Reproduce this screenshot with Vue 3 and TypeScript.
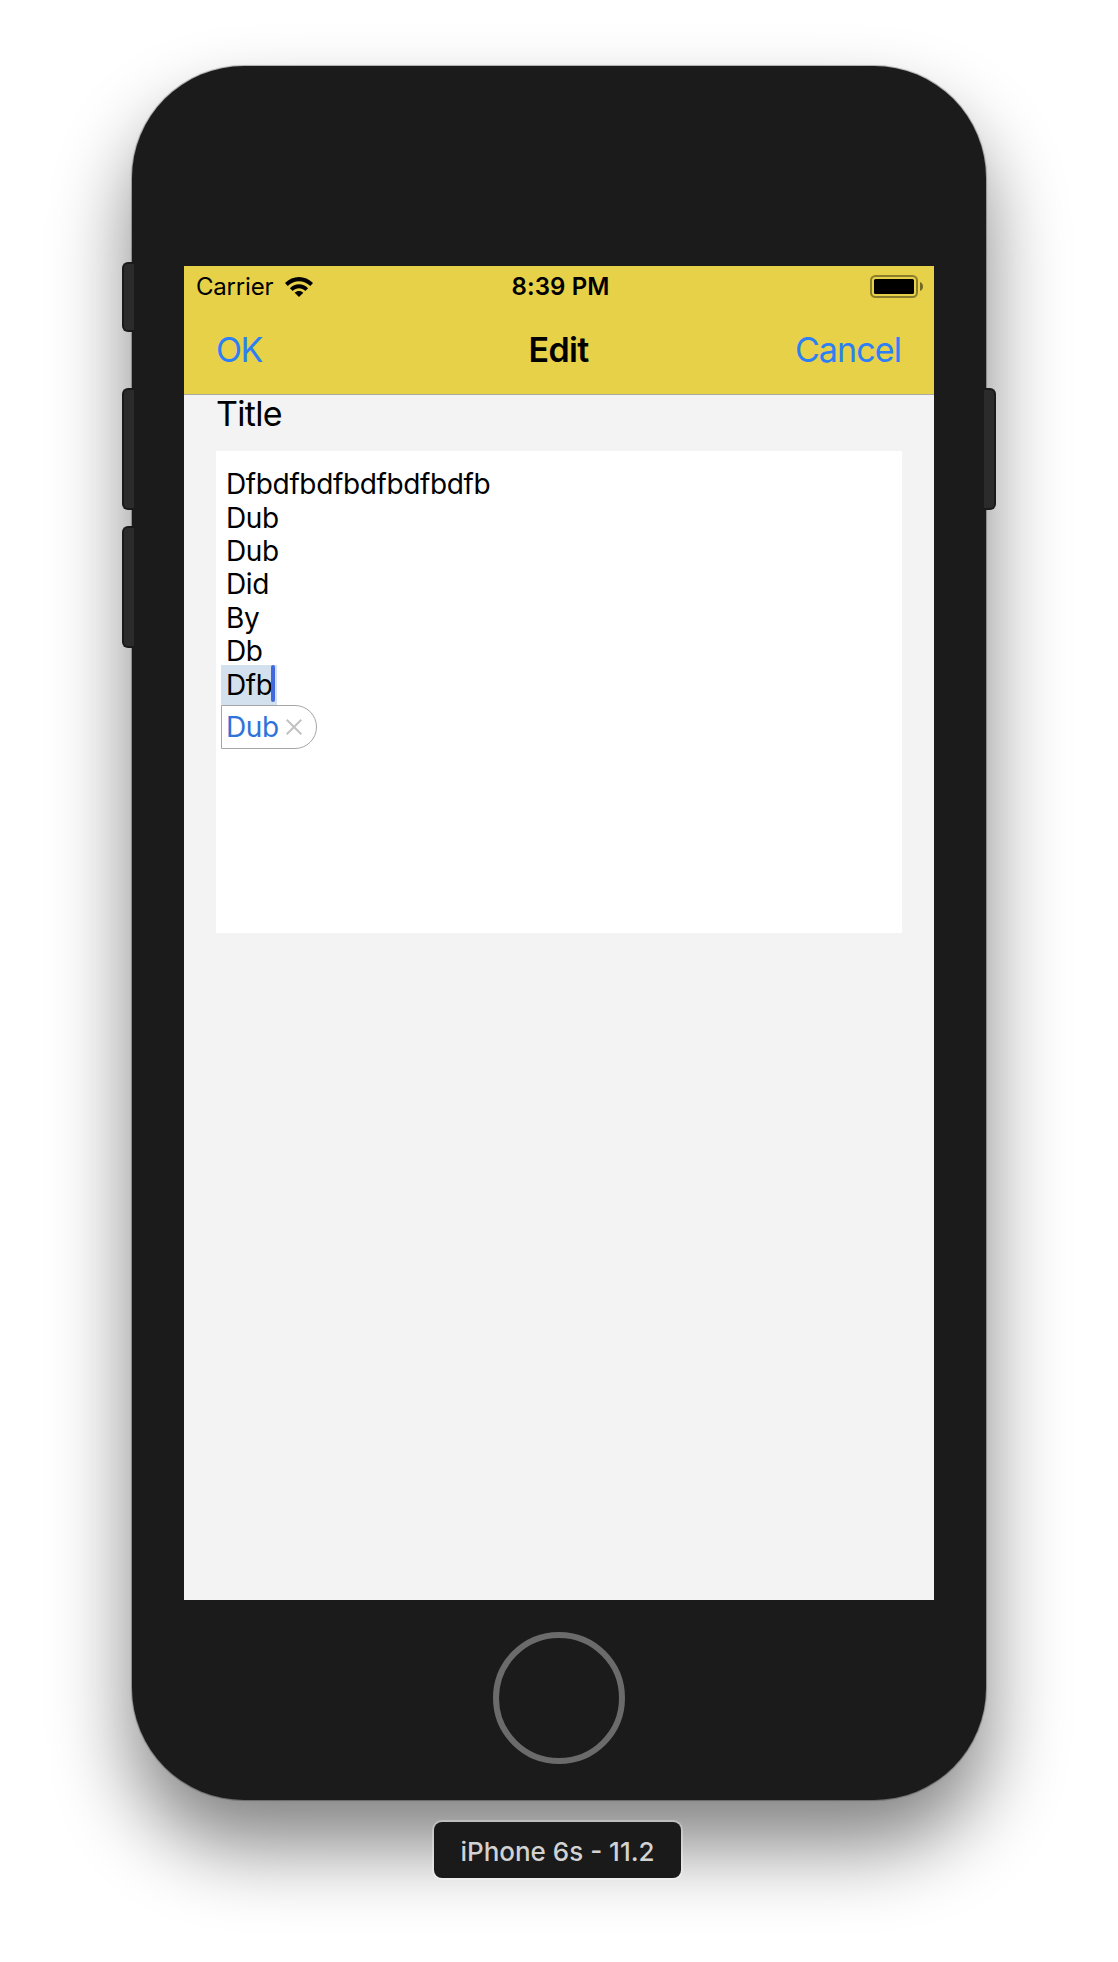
<script setup lang="ts">
interface SideButton {
  side: 'left' | 'right'
  top: number
  height: number
}

const sideButtons: SideButton[] = [
  { side: 'left', top: 196, height: 70 },
  { side: 'left', top: 322, height: 122 },
  { side: 'left', top: 460, height: 122 },
  { side: 'right', top: 322, height: 122 },
]

const lines: string[] = ['Dfbdfbdfbdfbdfbdfb', 'Dub', 'Dub', 'Did', 'By', 'Db']
</script>

<template>
  <main class="stage">
    <div class="device">
      <span
        v-for="(b, i) in sideButtons"
        :key="i"
        class="side-button"
        :class="b.side"
        :style="{ top: b.top + 'px', height: b.height + 'px' }"
      ></span>

      <div class="screen">
        <header class="top">
          <div class="status">
            <div class="carrier">
              <span class="carrier-name">Carrier</span>
              <svg class="wifi" width="28" height="20" viewBox="0 0 28 20">
                <path d="M0 6.1C7.7-2 20.3-2 28 6.1L25.3 8.9C19.1 2.6 8.9 2.6 2.7 8.9Z" />
                <path d="M4.9 11.2C9.9 5.9 18.1 5.9 23.1 11.2L20.3 13.9C16.8 10.4 11.2 10.4 7.7 13.9Z" />
                <path d="M9.7 15.8C12.1 13.4 15.9 13.4 18.3 15.8L14 20Z" />
              </svg>
            </div>
            <span class="clock">8:39 PM</span>
            <svg class="battery" width="53" height="23" viewBox="0 0 53 23">
              <rect x="1" y="1" width="46" height="21" rx="4.5" fill="none" stroke="#000" stroke-opacity=".4" stroke-width="2" />
              <rect x="4" y="4" width="40" height="15" rx="1.5" />
              <path d="M50 7C54 8.5 54 14.5 50 16Z" fill-opacity=".5" />
            </svg>
          </div>
          <nav class="nav">
            <a class="ok">OK</a>
            <strong class="heading">Edit</strong>
            <a class="cancel">Cancel</a>
          </nav>
        </header>

        <label class="title">Title</label>
        <section class="editor">
          <div v-for="(line, i) in lines" :key="i" class="line">{{ line }}</div>
          <div class="marked"><span class="line">Dfb</span><i class="caret"></i></div>
          <div class="suggestion">
            <span class="line">Dub</span>
            <svg class="close" width="16" height="16" viewBox="0 0 16 16">
              <path d="M.7.7L15.3 15.3M15.3.7L.7 15.3" fill="none" stroke="#c2c2c2" stroke-width="2" />
            </svg>
          </div>
        </section>
      </div>

      <div class="home"></div>
    </div>
    <div class="caption"><span>iPhone 6s - 11.2</span></div>
  </main>
</template>

<style>
body {
  margin: 0;
  background: #fff;
}
</style>

<style scoped>
.stage {
  box-sizing: border-box;
  width: 1118px;
  height: 1962px;
  padding-top: 66px;
  overflow: hidden;
  display: flex;
  flex-direction: column;
  align-items: center;
  background: #fff;
  font-family: Inter, Roboto, sans-serif;
  color: #000;
}
.device {
  position: relative;
  box-sizing: border-box;
  width: 854px;
  height: 1734px;
  padding-top: 200px;
  border-radius: 112px;
  background: #1b1b1b;
  box-shadow: 0 0 0 1px rgba(0, 0, 0, 0.22), 0 0 3px rgba(0, 0, 0, 0.14), 0 46px 80px rgba(0, 0, 0, 0.49);
  display: flex;
  flex-direction: column;
  align-items: center;
  flex: none;
}
.side-button {
  position: absolute;
  box-sizing: border-box;
  width: 12px;
  background: #2b2b2b;
  border: 2px solid #1a1a1a;
}
.side-button.left {
  left: -10px;
  border-right: 0;
  border-radius: 6px 0 0 6px;
}
.side-button.right {
  right: -10px;
  border-left: 0;
  border-radius: 0 6px 6px 0;
}
.screen {
  width: 750px;
  height: 1334px;
  background: #f3f3f3;
  display: flex;
  flex-direction: column;
  flex: none;
}
.top {
  box-sizing: border-box;
  height: 129px;
  background: #e7d148;
  border-bottom: 1px solid #aaa9a2;
}
.status {
  height: 40px;
  padding: 0 11px 0 12px;
  display: grid;
  grid-template-columns: 1fr auto 1fr;
  align-items: center;
  font-size: 24px;
  line-height: 40px;
}
.carrier {
  display: flex;
  align-items: center;
}
.carrier-name {
  width: 89px;
  padding-top: 1px;
  white-space: nowrap;
  letter-spacing: -0.2px;
}
.clock {
  padding: 1px 0 0 2px;
  font-weight: 600;
  letter-spacing: 0.1px;
}
.battery {
  justify-self: end;
}
.nav {
  height: 88px;
  padding: 0 33px 0 32px;
  display: grid;
  grid-template-columns: 1fr auto 1fr;
  align-items: center;
  font-size: 34px;
  line-height: 88px;
}
.nav a {
  color: #2d7ff5;
}
.ok {
  letter-spacing: -1.5px;
}
.cancel {
  justify-self: end;
  letter-spacing: -0.9px;
}
.heading {
  font-weight: 600;
  letter-spacing: -0.7px;
}
.title {
  height: 56px;
  padding-left: 32px;
  font-size: 34px;
  line-height: 38px;
  letter-spacing: -0.7px;
}
.editor {
  box-sizing: border-box;
  width: 686px;
  height: 482px;
  margin-left: 32px;
  padding: 17.2px 5px 0;
  background: #fff;
}
.line {
  height: 33.4px;
  padding-left: 5px;
  font-size: 28px;
  line-height: 33.4px;
  letter-spacing: -0.37px;
  white-space: nowrap;
}
.marked {
  width: 56px;
  height: 40px;
  margin-top: -3.6px;
  background: #d3e0ed;
  display: flex;
  align-items: flex-start;
  position: relative;
}
.marked .line {
  padding-top: 4px;
}
.caret {
  position: absolute;
  left: 50px;
  top: 0;
  width: 4px;
  height: 37px;
  border-radius: 2px;
  background: #4169dd;
}
.suggestion {
  box-sizing: border-box;
  width: 96px;
  height: 44px;
  border: 1px solid #a6a6a6;
  border-radius: 0 22px 22px 0;
  display: flex;
  align-items: center;
  color: #2f73d8;
}
.suggestion .line {
  width: 60px;
  padding-top: 1px;
  padding-left: 4px;
}
.home {
  box-sizing: border-box;
  width: 132px;
  height: 132px;
  margin-top: 32px;
  border: 6px solid #6b6b6b;
  border-radius: 50%;
}
.caption {
  width: 247px;
  height: 56px;
  margin-top: 22px;
  margin-right: 3px;
  border-radius: 8px;
  background: #1a1a1a;
  box-shadow: 0 0 0 2px rgba(255, 255, 255, 0.3);
  position: relative;
  color: #d2d2d2;
  font-size: 26px;
  font-weight: 500;
  line-height: 59px;
  text-align: center;
}
</style>
